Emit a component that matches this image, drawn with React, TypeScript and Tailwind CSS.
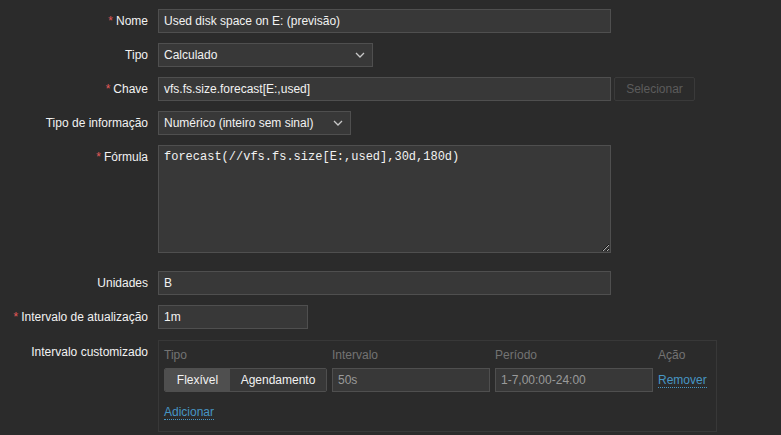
import React from 'react';

const box = "h-[24px] bg-[#383838] border border-[#4f4f4f] px-[5px] flex items-center";
const field = box + " text-[#f2f2f2]";
const dimField = box + " text-[#9a9a9a]";

function Label({ text, required, top }: { text: string; required?: boolean; top?: string }) {
  return (
    <div className={"w-[148px] shrink-0 text-right leading-[14px] " + (top ?? "")}>
      {required && <span className="text-[#e45959] mr-[3px]">*</span>}
      {text}
    </div>
  );
}

function Chevron() {
  return (
    <svg width="10" height="6" viewBox="0 0 10 6" className="ml-auto mr-[2px]">
      <path d="M1 1 L5 5 L9 1" fill="none" stroke="#c8c8c8" strokeWidth="1.3" />
    </svg>
  );
}

function Select({ value, width }: { value: string; width: string }) {
  return (
    <div className={field + " " + width}>
      <span>{value}</span>
      <Chevron />
    </div>
  );
}

export default function App() {
  return (
    <div className="min-h-screen bg-[#2b2b2b] text-[#f2f2f2] text-[12px] font-['Liberation_Sans',Arial,sans-serif] pt-[9px]">
      <div className="flex flex-col gap-[10px]">
        <div className="flex items-center">
          <Label text="Nome" required />
          <div className={field + " ml-[10px] w-[453px]"}>Used disk space on E: (previsão)</div>
        </div>

        <div className="flex items-center">
          <Label text="Tipo" />
          <div className="ml-[10px]">
            <Select value="Calculado" width="w-[215px]" />
          </div>
        </div>

        <div className="flex items-center">
          <Label text="Chave" required />
          <div className={field + " ml-[10px] w-[453px]"}>vfs.fs.size.forecast[E:,used]</div>
          <button className="ml-[3px] h-[24px] w-[81px] border border-[#3a3a3a] rounded-[2px] text-[#5c5c5c] bg-[#2b2b2b]">
            Selecionar
          </button>
        </div>

        <div className="flex items-center">
          <Label text="Tipo de informação" />
          <div className="ml-[10px]">
            <Select value="Numérico (inteiro sem sinal)" width="w-[193px]" />
          </div>
        </div>

        <div className="flex items-start">
          <Label text="Fórmula" required top="pt-[5px]" />
          <textarea
            readOnly
            defaultValue="forecast(//vfs.fs.size[E:,used],30d,180d)"
            className="ml-[10px] w-[453px] h-[108px] bg-[#383838] border border-[#4f4f4f] text-[#f2f2f2] pl-[5px] pr-[6px] py-[3px] leading-[16px] text-[12px] font-['Liberation_Mono','Courier_New',monospace] outline-none [color-scheme:dark]"
          />
        </div>

        <div className="flex items-center mt-[8px]">
          <Label text="Unidades" />
          <div className={field + " ml-[10px] w-[453px]"}>B</div>
        </div>

        <div className="flex items-center">
          <Label text="Intervalo de atualização" required />
          <div className={field + " ml-[10px] w-[150px]"}>1m</div>
        </div>

        <div className="flex items-start mt-[1px]">
          <Label text="Intervalo customizado" top="pt-[5px]" />
          <div className="ml-[10px] w-[559px] border border-[#383838] pl-[5px] pt-[5px] pb-[10px]">
            <div className="grid grid-cols-[163px_158px_158px_auto] gap-x-[5px] text-[#737373] leading-[18px]">
              <div>Tipo</div>
              <div>Intervalo</div>
              <div>Período</div>
              <div>Ação</div>
            </div>
            <div className="grid grid-cols-[163px_158px_158px_auto] gap-x-[5px] mt-[4px] items-center">
              <div className="flex h-[24px] border border-[#4f4f4f] rounded-[2px] overflow-hidden">
                <div className="w-[65px] bg-[#4f4f4f] flex items-center justify-center">Flexível</div>
                <div className="flex-1 bg-[#383838] flex items-center justify-center">Agendamento</div>
              </div>
              <div className={dimField}>50s</div>
              <div className={dimField}>1-7,00:00-24:00</div>
              <div>
                <span className="text-[#4796c4] border-b border-dotted border-[#4796c4] leading-[14px] inline-block">Remover</span>
              </div>
            </div>
            <div className="mt-[11px]">
              <span className="text-[#4796c4] border-b border-dotted border-[#4796c4] leading-[14px] inline-block">Adicionar</span>
            </div>
          </div>
        </div>
      </div>
    </div>
  );
}
